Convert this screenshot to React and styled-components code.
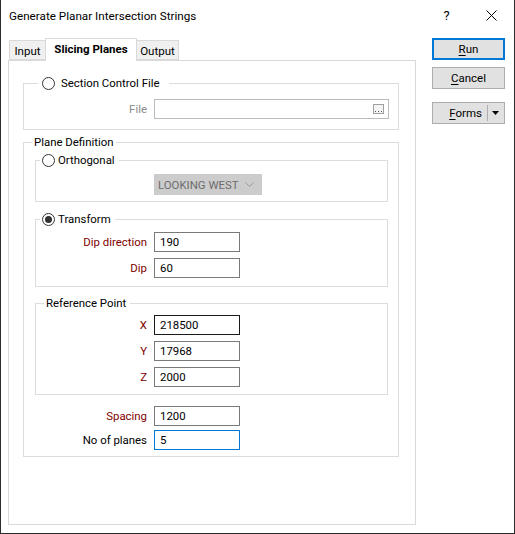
import React from "react";
import styled, { createGlobalStyle } from "styled-components";

const GlobalStyle = createGlobalStyle`
  * { box-sizing: border-box; }
  body {
    margin: 0;
    background: #ffffff;
    font-family: Roboto, "Noto Sans", sans-serif;
    font-size: 11.4px;
    color: #000;
  }
`;

const Window = styled.div`
  width: 515px;
  height: 534px;
  background: #ffffff;
  border: 1px solid #2b2b2b;
  border-top: none;
  display: flex;
  flex-direction: column;
`;

const TitleBar = styled.div`
  height: 31px;
  display: flex;
  align-items: center;
  padding-left: 8px;
`;

const Title = styled.div`
  flex: 1;
  font-size: 11.7px;
  padding-top: 1px;
`;

const TitleButton = styled.div`
  width: 45px;
  height: 31px;
  display: flex;
  align-items: center;
  justify-content: center;
  font-size: 13px;
`;

const Body = styled.div`
  display: flex;
  padding: 7px 0 0 7px;
`;

const TabArea = styled.div`
  display: flex;
  flex-direction: column;
`;

const TabStrip = styled.div`
  display: flex;
  align-items: flex-end;
  height: 22px;
  padding-left: 1px;
`;

const Tab = styled.div`
  width: ${(p) => p.$w}px;
  height: ${(p) => (p.$active ? 23 : 20)}px;
  margin-left: ${(p) => (p.$first ? 0 : -1)}px;
  margin-bottom: ${(p) => (p.$active ? -1 : 0)}px;
  border: 1px solid #d9d9d9;
  border-bottom: ${(p) => (p.$active ? "none" : "1px solid #d9d9d9")};
  background: ${(p) => (p.$active ? "#ffffff" : "#f0f0f0")};
  font-weight: ${(p) => (p.$active ? 700 : 400)};
  font-size: 11.5px;
  position: relative;
  z-index: ${(p) => (p.$active ? 2 : 1)};
  display: flex;
  justify-content: center;
  padding-top: 2px;
  line-height: 16px;
`;

const Panel = styled.div`
  width: 408px;
  height: 465px;
  border: 1px solid #d9d9d9;
  background: #ffffff;
  padding: 22px 16px 0 14px;
  display: flex;
  flex-direction: column;
`;

const Group = styled.div`
  border: 1px solid #dcdcdc;
  margin: ${(p) => p.$margin || "0"};
  padding-bottom: ${(p) => p.$pb || 0}px;
  display: flex;
  flex-direction: column;
`;

const Legend = styled.div`
  align-self: flex-start;
  height: 16px;
  margin: -9px 0 0 ${(p) => p.$ml}px;
  padding: 0 ${(p) => p.$pr}px 0 ${(p) => p.$pl}px;
  background: #ffffff;
  display: flex;
  align-items: center;
  gap: ${(p) => p.$gap || 0}px;
  line-height: 16px;
  white-space: nowrap;
`;

const Radio = styled.span`
  width: 13px;
  height: 13px;
  border-radius: 50%;
  border: 1px solid #333333;
  background: #ffffff;
  display: flex;
  align-items: center;
  justify-content: center;
  flex: none;

  &::after {
    content: "";
    display: ${(p) => (p.$checked ? "block" : "none")};
    width: 7px;
    height: 7px;
    border-radius: 50%;
    background: #333333;
  }
`;

const Rows = styled.div`
  display: flex;
  flex-direction: column;
  gap: ${(p) => p.$gap}px;
  margin-top: ${(p) => p.$mt}px;
`;

const Row = styled.div`
  display: flex;
  align-items: center;
  gap: 7px;
  height: 20px;
`;

const Label = styled.label`
  width: ${(p) => p.$w}px;
  text-align: right;
  color: ${(p) => p.$color || "#000"};
  white-space: nowrap;
`;

const Input = styled.div`
  width: ${(p) => p.$w || 86}px;
  height: 20px;
  border: 1px solid ${(p) => p.$border || "#7a7a7a"};
  background: #ffffff;
  display: flex;
  align-items: center;
  padding: 0 5px;
  line-height: 16px;
`;

const Ellipsis = styled.span`
  margin-left: auto;
  margin-right: -1px;
  display: flex;
`;

const Combo = styled.div`
  width: 108px;
  height: 21px;
  margin: 6px 0 0 118px;
  background: #cccccc;
  border: 1px solid #cccccc;
  color: #6d6d6d;
  display: flex;
  align-items: center;
  padding: 0 7px 0 3px;
  justify-content: space-between;
  white-space: nowrap;
`;

const ButtonColumn = styled.div`
  display: flex;
  flex-direction: column;
  margin-left: 16px;
`;

const Button = styled.div`
  width: 73px;
  height: 22px;
  margin-top: ${(p) => p.$mt || 0}px;
  background: #e1e1e1;
  border: ${(p) => (p.$default ? "2px solid #0078d7" : "1px solid #adadad")};
  display: flex;
  align-items: center;
  justify-content: center;
  line-height: 16px;
  font-size: 11.5px;

  u {
    text-decoration: underline;
    text-underline-offset: 2px;
  }
`;

const SplitButton = styled(Button)`
  justify-content: flex-end;
  padding-right: 5px;
`;

const SplitDivider = styled.span`
  width: 1px;
  height: 16px;
  background: #adadad;
  margin: 0 4px 0 5px;
`;

const dark = "#800000";

export default function App() {
  return (
    <>
      <GlobalStyle />
      <Window>
        <TitleBar>
          <Title>Generate Planar Intersection Strings</Title>
          <TitleButton>?</TitleButton>
          <TitleButton>
            <svg width="11" height="11" viewBox="0 0 11 11">
              <path d="M0.5 0.5 L10.5 10.5 M10.5 0.5 L0.5 10.5" stroke="#000" strokeWidth="1" />
            </svg>
          </TitleButton>
        </TitleBar>
        <Body>
          <TabArea>
            <TabStrip>
              <Tab $w={37} $first>Input</Tab>
              <Tab $w={92} $active>Slicing Planes</Tab>
              <Tab $w={43}>Output</Tab>
            </TabStrip>
            <Panel>
              <Group $pb={10}>
                <Legend $ml={14} $pl={4} $pr={9} $gap={6}>
                  <Radio />
                  Section Control File
                </Legend>
                <Rows $mt={8} $gap={6}>
                  <Row>
                    <Label $w={123} $color="#8c8c8c">File</Label>
                    <Input $w={235} $border="#bcbcbc">
                      <Ellipsis>
                        <svg width="11" height="10" viewBox="0 0 11 10">
                          <rect x="0.5" y="0.5" width="10" height="9" fill="#f4f4f4" stroke="#a0a0a0" />
                          <rect x="2" y="7" width="1" height="1" fill="#555" />
                          <rect x="5" y="7" width="1" height="1" fill="#555" />
                          <rect x="8" y="7" width="1" height="1" fill="#555" />
                        </svg>
                      </Ellipsis>
                    </Input>
                  </Row>
                </Rows>
              </Group>

              <Group $margin="12px 0 0 0" $pb={6}>
                <Legend $ml={8} $pl={2} $pr={3}>Plane Definition</Legend>

                <Group $margin="10px 10px 0 11px" $pb={6}>
                  <Legend $ml={4} $pl={2} $pr={4} $gap={3}>
                    <Radio />
                    Orthogonal
                  </Legend>
                  <Combo>
                    <span>LOOKING WEST</span>
                    <svg width="9" height="5" viewBox="0 0 9 5">
                      <path d="M0.5 0.5 L4.5 4.5 L8.5 0.5" fill="none" stroke="#9a9a9a" strokeWidth="1" />
                    </svg>
                  </Combo>
                </Group>

                <Group $margin="17px 10px 0 11px" $pb={8}>
                  <Legend $ml={4} $pl={2} $pr={4} $gap={3}>
                    <Radio $checked />
                    Transform
                  </Legend>
                  <Rows $mt={5} $gap={6}>
                    <Row>
                      <Label $w={111} $color={dark}>Dip direction</Label>
                      <Input>190</Input>
                    </Row>
                    <Row>
                      <Label $w={111} $color={dark}>Dip</Label>
                      <Input>60</Input>
                    </Row>
                  </Rows>
                </Group>

                <Group $margin="16px 10px 0 11px" $pb={7}>
                  <Legend $ml={8} $pl={2} $pr={4}>Reference Point</Legend>
                  <Rows $mt={4} $gap={6}>
                    <Row>
                      <Label $w={111} $color={dark}>X</Label>
                      <Input $border="#1a1a1a">218500</Input>
                    </Row>
                    <Row>
                      <Label $w={111} $color={dark}>Y</Label>
                      <Input>17968</Input>
                    </Row>
                    <Row>
                      <Label $w={111} $color={dark}>Z</Label>
                      <Input>2000</Input>
                    </Row>
                  </Rows>
                </Group>

                <Rows $mt={11} $gap={4}>
                  <Row>
                    <Label $w={123} $color={dark}>Spacing</Label>
                    <Input>1200</Input>
                  </Row>
                  <Row>
                    <Label $w={123}>No of planes</Label>
                    <Input $border="#0078d7">5</Input>
                  </Row>
                </Rows>
              </Group>
            </Panel>
          </TabArea>

          <ButtonColumn>
            <Button $default>
              <span><u>R</u>un</span>
            </Button>
            <Button $mt={7}>
              <span><u>C</u>ancel</span>
            </Button>
            <SplitButton $mt={13}>
              <span><u>F</u>orms</span>
              <SplitDivider />
              <svg width="7" height="4" viewBox="0 0 7 4">
                <path d="M0 0 H7 L3.5 4 Z" fill="#000" />
              </svg>
            </SplitButton>
          </ButtonColumn>
        </Body>
      </Window>
    </>
  );
}
